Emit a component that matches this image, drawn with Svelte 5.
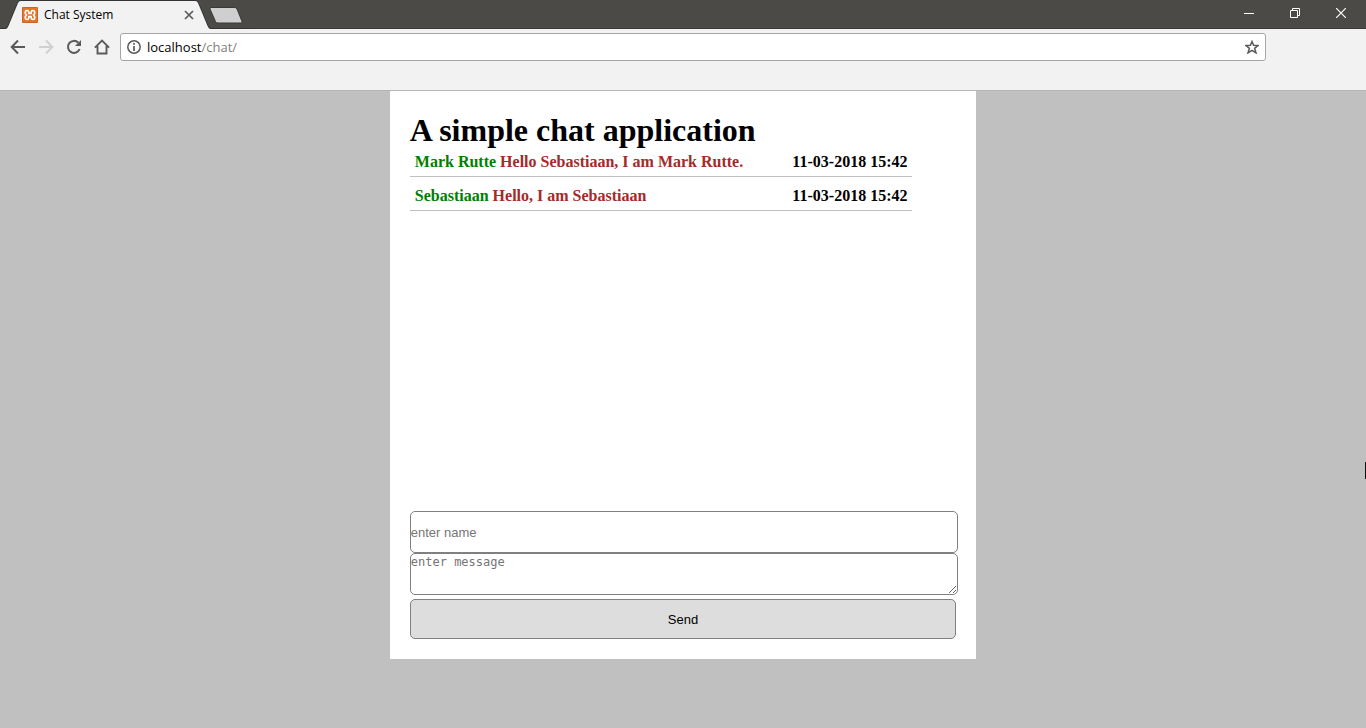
<script>
  const messages = [
    { name: 'Mark Rutte', text: 'Hello Sebastiaan, I am Mark Rutte.', date: '11-03-2018 15:42' },
    { name: 'Sebastiaan', text: 'Hello, I am Sebastiaan', date: '11-03-2018 15:42' }
  ];
</script>

<div class="window">
  <header>
    <div class="tabstrip">
      <svg class="shapes" width="250" height="29" viewBox="0 0 250 29" aria-hidden="true">
        <path d="M0 28.5H5.500Q7 28.500 8 26L17.500 3Q18.500 .5 20.500 .5H195.500Q197.500 .5 198.500 3L208 26Q209 28.500 210.500 28.500H250" fill="none" stroke="#353432" />
        <path d="M0 29H6Q7.500 28.500 8.500 26L18 3Q19 1 20.500 1H195.500Q197 1 198 3L207.500 26Q208.500 28.500 210 29Z" fill="#f2f2f2" />
        <path d="M211 7.500H234.500Q236.500 7.500 237 9L242 21.500Q242.500 23 241 23H218Q216 23 215.500 21.500L210 9Q209.500 7.500 211 7.500Z" fill="#cfcfcf" stroke="#3a3937" />
      </svg>
      <div class="tab">
        <svg width="16" height="16" viewBox="0 0 16 16" aria-hidden="true">
          <rect width="16" height="16" rx="1" fill="#e87424" />
          <rect x=".5" y=".5" width="15" height="15" rx="1" fill="none" stroke="#c8642c" />
          <path d="M4.500 8Q3 6.800 3.200 5.200Q3.500 3.500 5 3.500Q6.600 3.500 6.800 5V6.300H9.200V5Q9.400 3.500 11 3.500Q12.500 3.500 12.800 5.200Q13 6.800 11.500 8Q13 9.200 12.800 10.800Q12.500 12.500 11 12.500Q9.400 12.500 9.200 11V9.700H6.800V11Q6.600 12.500 5 12.500Q3.500 12.500 3.200 10.800Q3 9.200 4.500 8Z" fill="none" stroke="#fff" stroke-width="1.700" stroke-linejoin="round" />
        </svg>
        <span class="title">Chat System</span>
        <button class="icon" aria-label="Close tab">
          <svg width="10" height="10" viewBox="0 0 10 10"><path d="M1 1L9 9M9 1L1 9" stroke="#5a5a5a" stroke-width="1.700" /></svg>
        </button>
      </div>
      <div class="controls">
        <button class="icon" aria-label="Minimize"><svg width="10" height="10" viewBox="0 0 10 10"><path d="M0 5.500H10" stroke="#fff" /></svg></button>
        <button class="icon" aria-label="Restore"><svg width="10" height="10" viewBox="0 0 10 10"><path d="M.5 2.500H7.500V9.500H.5ZM2.500 2.500V.5H9.500V7.500H7.500" fill="none" stroke="#fff" /></svg></button>
        <button class="icon" aria-label="Close"><svg width="10" height="10" viewBox="0 0 10 10"><path d="M0 0L10 10M10 0L0 10" stroke="#fff" stroke-width="1.200" /></svg></button>
      </div>
    </div>
    <nav>
      <button class="icon" aria-label="Back"><svg width="16" height="16" viewBox="0 0 16 16"><path d="M15 8H2M8 1.500L1.700 8L8 14.500" fill="none" stroke="#5a5a5a" stroke-width="2" /></svg></button>
      <button class="icon" aria-label="Forward" disabled><svg width="16" height="16" viewBox="0 0 16 16"><path d="M1 8H14M8 1.500L14.300 8L8 14.500" fill="none" stroke="#d0d0d0" stroke-width="2" /></svg></button>
      <button class="icon" aria-label="Reload"><svg width="16" height="16" viewBox="0 0 16 16"><path d="M13.600 10A6 6 0 1 1 12.300 3.700" fill="none" stroke="#5a5a5a" stroke-width="2" /><path d="M15 1V7H9Z" fill="#5a5a5a" /></svg></button>
      <button class="icon" aria-label="Home"><svg width="16" height="16" viewBox="0 0 16 16"><path d="M.9 8.700L8 1.600L15.100 8.700M3.500 7V14.500H12.500V7" fill="none" stroke="#5a5a5a" stroke-width="1.900" /></svg></button>
      <div class="address">
        <svg width="14" height="14" viewBox="0 0 14 14" aria-hidden="true"><circle cx="7" cy="7" r="6.200" fill="none" stroke="#5a5a5a" stroke-width="1.500" /><path d="M7 3V4.800M7 6V11" stroke="#5a5a5a" stroke-width="1.700" /></svg>
        <span class="url">localhost<span class="path">/chat/</span></span>
        <button class="icon" aria-label="Bookmark this page"><svg width="14" height="14" viewBox="0 0 14 14"><path d="M7 1.500L8.600 5.200L13 5.500L9.600 8.300L11 12.900L7 10.400L3 12.900L4.400 8.300L1 5.500L5.400 5.200Z" fill="none" stroke="#5a5a5a" stroke-width="1.500" /></svg></button>
      </div>
    </nav>
  </header>

  <main>
    <h1>A simple chat application</h1>
    <div class="chat">
      {#each messages as m}
        <div class="message">
          <span><span class="name">{m.name}</span> <span class="text">{m.text}</span></span>
          <time>{m.date}</time>
        </div>
      {/each}
    </div>
    <form onsubmit={(e) => e.preventDefault()}>
      <input type="text" placeholder="enter name" aria-label="enter name" />
      <textarea placeholder="enter message" aria-label="enter message"></textarea>
      <button class="send" type="submit">Send</button>
    </form>
  </main>
  <div class="edge"></div>
</div>

<style>
  :global(body) {
    margin: 0;
    background: #c0c0c0;
  }
  .window {
    position: relative;
    min-height: 100vh;
    font-family: "Liberation Serif", serif;
  }
  header {
    background: #f2f2f2;
    border-bottom: 1px solid #b4b4b4;
    font-family: "Open Sans", sans-serif;
  }
  .icon {
    display: flex;
    align-items: center;
    justify-content: center;
    padding: 0;
    border: 0;
    background: none;
  }
  .tabstrip {
    position: relative;
    display: flex;
    justify-content: space-between;
    height: 28px;
    background: #4b4a47;
    border-bottom: 1px solid #3a3937;
  }
  .shapes {
    position: absolute;
    left: 0;
    top: 0;
  }
  .tab {
    position: relative;
    display: flex;
    align-items: center;
    box-sizing: border-box;
    width: 194px;
    padding: 2px 0 0 22px;
    gap: 6px;
    font-size: 12px;
  }
  .title {
    flex: 1;
    line-height: 16px;
  }
  .controls {
    display: flex;
    padding-right: 2px;
  }
  .controls .icon {
    width: 46px;
    height: 26px;
  }
  nav {
    display: flex;
    align-items: center;
    gap: 12px;
    padding: 4px 100px 29px 10px;
  }
  .address {
    display: flex;
    align-items: center;
    box-sizing: border-box;
    flex: 1;
    height: 28px;
    margin-left: -2px;
    padding: 0 6px;
    gap: 6px;
    background: #fff;
    border: 1px solid #a6a6a6;
    border-radius: 3px;
    font-size: 13px;
  }
  .url {
    flex: 1;
    line-height: 18px;
  }
  .path {
    color: #808080;
  }
  main {
    width: 40%;
    margin: 0 auto;
    padding: 20px;
    background: #fff;
  }
  h1 {
    margin: 0;
    font-size: 32px;
    line-height: 38px;
  }
  .chat {
    width: 92%;
    min-height: 362px;
  }
  .message {
    display: flex;
    justify-content: space-between;
    margin-bottom: 6px;
    padding: 4px 5px 5px;
    border-bottom: 1px solid #c0c0c0;
    font-size: 16px;
    font-weight: bold;
    line-height: 18px;
  }
  .name {
    color: green;
  }
  .text {
    color: brown;
  }
  form {
    display: flex;
    flex-direction: column;
  }
  input,
  textarea {
    width: 100%;
    height: 40px;
    padding: 0;
    border: 1px solid gray;
    border-radius: 5px;
    background: #fff;
  }
  input {
    font: 13px "Liberation Sans", sans-serif;
  }
  textarea {
    margin-bottom: 4px;
    font: 12px/16px "DejaVu Sans Mono", monospace;
  }
  input::placeholder,
  textarea::placeholder {
    color: #757575;
  }
  .send {
    box-sizing: border-box;
    width: 100%;
    height: 40px;
    border: 1px solid gray;
    border-radius: 5px;
    background: #ddd;
    color: #000;
    font: 13px "Liberation Sans", sans-serif;
  }
  .edge {
    position: absolute;
    right: 0;
    top: 462px;
    width: 1px;
    height: 17px;
    background: #101018;
  }
</style>
